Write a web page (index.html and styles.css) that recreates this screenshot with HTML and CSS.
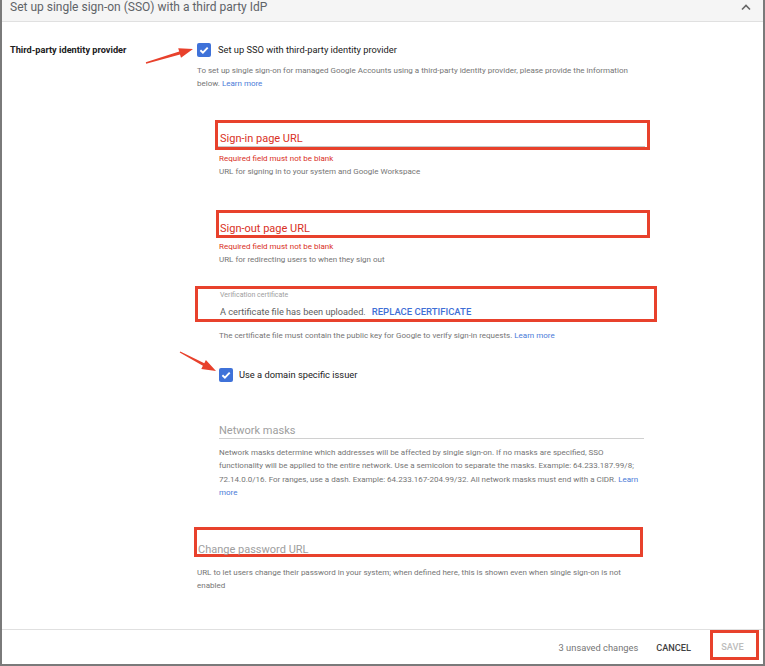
FILE: index.html
```html
<!DOCTYPE html>
<html>
<head>
<meta charset="utf-8">
<link rel="stylesheet" href="styles.css">
</head>
<body>
<div class="frame">
  <header class="hdr">
    <span class="title">Set up single sign-on (SSO) with a third party IdP</span>
    <svg class="chev" width="12" height="8" viewBox="0 0 12 8"><polyline points="2,6.5 6,2.5 10,6.5" fill="none" stroke="#666" stroke-width="1.6"/></svg>
  </header>
  <main class="content">
    <div class="label">Third-party identity provider</div>
    <div class="col">
      <div class="check-row">
        <span class="cb"><svg width="14" height="14" viewBox="0 0 14 14"><path d="M3.4 7.2 L5.9 9.6 L10.7 4.6" fill="none" stroke="#fff" stroke-width="1.9"/></svg></span>
        <span class="check-text">Set up SSO with third-party identity provider</span>
      </div>
      <p class="desc">To set up single sign-on for managed Google Accounts using a third-party identity provider, please provide the information<br>below. <a class="link">Learn more</a></p>

      <div class="box box-signin"><div class="ph err-ph">Sign-in page URL</div></div>
      <div class="errmsg">Required field must not be blank</div>
      <div class="help">URL for signing in to your system and Google Workspace</div>

      <div class="box box-signout"><div class="ph err-ph">Sign-out page URL</div></div>
      <div class="errmsg">Required field must not be blank</div>
      <div class="help">URL for redirecting users to when they sign out</div>

      <div class="box box-cert">
        <div class="cert-label">Verification certificate</div>
        <div class="cert-value">A certificate file has been uploaded.<span class="replace">REPLACE CERTIFICATE</span></div>
      </div>
      <div class="help indent cert-help">The certificate file must contain the public key for Google to verify sign-in requests. <a class="link">Learn more</a></div>

      <div class="check-row indent check2">
        <span class="cb"><svg width="14" height="14" viewBox="0 0 14 14"><path d="M3.4 7.2 L5.9 9.6 L10.7 4.6" fill="none" stroke="#fff" stroke-width="1.9"/></svg></span>
        <span class="check-text">Use a domain specific issuer</span>
      </div>

      <div class="masks indent">Network masks</div>
      <p class="masks-help indent">Network masks determine which addresses will be affected by single sign-on. If no masks are specified, SSO<br>functionality will be applied to the entire network. Use a semicolon to separate the masks. Example: 64.233.187.99/8;<br>72.14.0.0/16. For ranges, use a dash. Example: 64.233.167-204.99/32. All network masks must end with a CIDR. <a class="link">Learn</a><br><a class="link">more</a></p>

      <div class="box box-pw"><div class="ph">Change password URL</div></div>
      <p class="pw-help">URL to let users change their password in your system; when defined here, this is shown even when single sign-on is not<br>enabled</p>
    </div>
  </main>
  <footer class="foot">
    <span class="unsaved">3 unsaved changes</span>
    <span class="cancel">CANCEL</span>
    <span class="save">SAVE</span>
  </footer>
  <svg class="arrows" width="765" height="666" viewBox="0 0 765 666">
    <polygon fill="#e8412c" points="146.2,63.7 180.0,54.4 181.0,57.8 193,49 178.2,48.2 179.2,51.6 145.8,62.3"/>
    <polygon fill="#e8412c" points="179.7,352.6 202.9,365.8 201.3,368.9 216,371 205.9,360.1 204.3,363.2 180.3,351.4"/>
  </svg>
</div>
</body>
</html>
```
FILE: styles.css
```css
* { box-sizing: border-box; }
html, body { margin: 0; padding: 0; background: #fff; }
body { font-family: Roboto, "Liberation Sans", Arial, sans-serif; color: #212121; }

.frame {
  position: relative;
  width: 765px;
  height: 666px;
  border-left: 2px solid #7a7a7a;
  border-right: 2px solid #7a7a7a;
  border-bottom: 2px solid #7a7a7a;
  display: flex;
  flex-direction: column;
  overflow: hidden;
}

.hdr {
  height: 22px;
  flex: none;
  background: #f5f5f5;
  border-bottom: 1px solid #e0e0e0;
  display: flex;
  align-items: flex-start;
  justify-content: space-between;
  padding: 0 11px 0 8px;
}
.title {
  font-size: 12px;
  line-height: 15px;
  color: #5f6368;
  font-weight: 400;
}
.chev { margin-top: 3px; }

.content {
  flex: 1;
  display: grid;
  grid-template-columns: 187px 1fr;
  padding: 21px 0 0 8px;
}
.label {
  font-size: 9.2px;
  font-weight: 700;
  line-height: 14px;
  color: #212121;
}
.col { display: flex; flex-direction: column; align-items: flex-start; }

.check-row { display: flex; align-items: center; height: 14px; gap: 7px; }
.cb {
  width: 14px; height: 14px;
  border-radius: 2px;
  background: #3f72d9;
  display: block;
}
.cb svg { display: block; }
.check-text { font-size: 9.3px; line-height: 14px; color: #212121; }

.desc {
  margin: 6.5px 0 0 0;
  font-size: 8px;
  line-height: 13px;
  color: #757575;
  white-space: nowrap;
}
.link { color: #4a7bd8; }

.box { border: 3px solid #e8412c; }
.ph { font-size: 11px; line-height: 14px; color: #9e9e9e; padding-left: 2px; }
.err-ph { color: #d93025; }

.box-signin { margin: 30.5px 0 0 18px; width: 435px; height: 30px; }
.box-signin .ph { padding-top: 9px; padding-bottom: 1px; line-height: 13px; border-bottom: 1px solid #c8c8c8; margin-right: 2px; }
.box-signout { margin: 32px 0 0 19px; width: 434px; height: 28px; }
.box-signout .ph { padding-top: 9px; padding-left: 1px; }

.errmsg { margin: 1.5px 0 0 22px; font-size: 8px; line-height: 13px; color: #d93025; }
.help { margin: 0 0 0 22px; font-size: 8px; line-height: 13px; color: #757575; }
.errmsg + .help { margin-top: 0.5px; }

.box-cert { margin: 19.5px 0 0 -2px; width: 462px; height: 36px; padding: 1px 0 0 22px; }
.cert-label { font-size: 7px; line-height: 10px; color: #9e9e9e; }
.cert-value { margin-top: 5px; font-size: 9.2px; line-height: 14px; color: #616161; }
.replace { margin-left: 6px; color: #3f6fd6; font-weight: 500; font-size: 9.5px; }

.indent { margin-left: 22px; }
.cert-help { margin-top: 7.5px; }
.check2 { margin-top: 25.5px; gap: 6px; }

.masks {
  margin-top: 42px;
  width: 425px;
  font-size: 11px;
  line-height: 14px;
  color: #9e9e9e;
  padding-bottom: 0;
  border-bottom: 1px solid #d0d0d0;
}
.masks-help {
  margin-top: 7.3px;
  margin-bottom: 0;
  font-size: 8px;
  line-height: 13.4px;
  color: #757575;
  white-space: nowrap;
}

.box-pw { margin: 28px 0 0 -3px; width: 449px; height: 30px; }
.box-pw .ph { padding-top: 13px; padding-left: 1px; }
.pw-help { margin: 8.5px 0 0 0; font-size: 8px; line-height: 13px; color: #757575; white-space: nowrap; }

.foot {
  flex: none;
  height: 35px;
  border-top: 1px solid #e0e0e0;
  display: flex;
  justify-content: flex-end;
  align-items: flex-start;
  padding-right: 4px;
}
.unsaved { margin-top: 11px; font-size: 9.3px; line-height: 14px; color: #757575; margin-right: 18px; }
.cancel { margin-top: 11px; font-size: 9.2px; line-height: 14px; color: #424242; font-weight: 500; margin-right: 19px; }
.save {
  width: 49px; height: 30px;
  border: 3px solid #e8412c;
  font-size: 9.2px; font-weight: 500;
  color: #bdbdbd;
  display: flex; align-items: center; justify-content: center;
  padding: 3px 4px 0 0;
}

.arrows { position: absolute; left: -2px; top: 0; pointer-events: none; }
```
